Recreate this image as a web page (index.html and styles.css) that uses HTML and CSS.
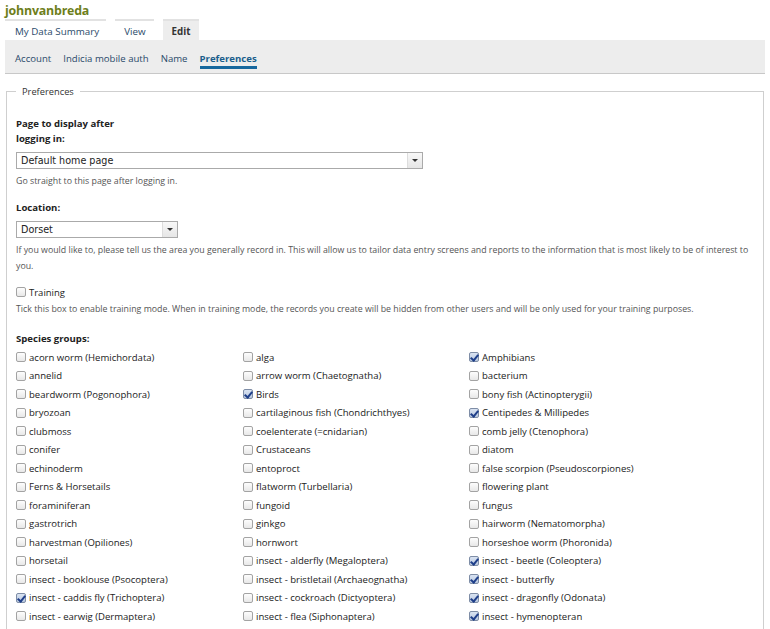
FILE: index.html
```html
<!DOCTYPE html>
<html lang="en">
<head>
<meta charset="utf-8">
<title>johnvanbreda</title>
<link rel="stylesheet" href="styles.css">
</head>
<body>
<h1 class="user-title">johnvanbreda</h1>
<ul class="tabs-primary">
  <li class="tab">My Data Summary</li>
  <li class="tab">View</li>
  <li class="tab active">Edit</li>
</ul>
<ul class="tabs-secondary">
  <li class="subtab">Account</li>
  <li class="subtab">Indicia mobile auth</li>
  <li class="subtab">Name</li>
  <li class="subtab active">Preferences</li>
</ul>
<fieldset class="prefs">
  <legend class="prefs-legend">Preferences</legend>
  <div class="field field-first">
    <div class="label label-narrow">Page to display after logging in:</div>
    <div class="select select-wide"><span class="select-value">Default home page</span><span class="select-btn"><span class="arrow"></span></span></div>
    <div class="desc">Go straight to this page after logging in.</div>
  </div>
  <div class="field">
    <div class="label">Location:</div>
    <div class="select select-short"><span class="select-value">Dorset</span><span class="select-btn"><span class="arrow"></span></span></div>
    <div class="desc desc-after-short">If you would like to, please tell us the area you generally record in. This will allow us to tailor data entry screens and reports to the information that is most likely to be of interest to you.</div>
  </div>
  <div class="field">
    <div class="check-line"><span class="cb"></span>Training</div>
    <div class="desc desc-after-check">Tick this box to enable training mode. When in training mode, the records you create will be hidden from other users and will be only used for your training purposes.</div>
  </div>
  <div class="field field-species">
    <div class="label">Species groups:</div>
    <div class="species">
      <div class="item"><span class="cb"></span>acorn worm (Hemichordata)</div>
      <div class="item"><span class="cb"></span>alga</div>
      <div class="item"><span class="cb on"></span>Amphibians</div>
      <div class="item"><span class="cb"></span>annelid</div>
      <div class="item"><span class="cb"></span>arrow worm (Chaetognatha)</div>
      <div class="item"><span class="cb"></span>bacterium</div>
      <div class="item"><span class="cb"></span>beardworm (Pogonophora)</div>
      <div class="item"><span class="cb on"></span>Birds</div>
      <div class="item"><span class="cb"></span>bony fish (Actinopterygii)</div>
      <div class="item"><span class="cb"></span>bryozoan</div>
      <div class="item"><span class="cb"></span>cartilaginous fish (Chondrichthyes)</div>
      <div class="item"><span class="cb on"></span>Centipedes &amp; Millipedes</div>
      <div class="item"><span class="cb"></span>clubmoss</div>
      <div class="item"><span class="cb"></span>coelenterate (=cnidarian)</div>
      <div class="item"><span class="cb"></span>comb jelly (Ctenophora)</div>
      <div class="item"><span class="cb"></span>conifer</div>
      <div class="item"><span class="cb"></span>Crustaceans</div>
      <div class="item"><span class="cb"></span>diatom</div>
      <div class="item"><span class="cb"></span>echinoderm</div>
      <div class="item"><span class="cb"></span>entoproct</div>
      <div class="item"><span class="cb"></span>false scorpion (Pseudoscorpiones)</div>
      <div class="item"><span class="cb"></span>Ferns &amp; Horsetails</div>
      <div class="item"><span class="cb"></span>flatworm (Turbellaria)</div>
      <div class="item"><span class="cb"></span>flowering plant</div>
      <div class="item"><span class="cb"></span>foraminiferan</div>
      <div class="item"><span class="cb"></span>fungoid</div>
      <div class="item"><span class="cb"></span>fungus</div>
      <div class="item"><span class="cb"></span>gastrotrich</div>
      <div class="item"><span class="cb"></span>ginkgo</div>
      <div class="item"><span class="cb"></span>hairworm (Nematomorpha)</div>
      <div class="item"><span class="cb"></span>harvestman (Opiliones)</div>
      <div class="item"><span class="cb"></span>hornwort</div>
      <div class="item"><span class="cb"></span>horseshoe worm (Phoronida)</div>
      <div class="item"><span class="cb"></span>horsetail</div>
      <div class="item"><span class="cb"></span>insect - alderfly (Megaloptera)</div>
      <div class="item"><span class="cb on"></span>insect - beetle (Coleoptera)</div>
      <div class="item"><span class="cb"></span>insect - booklouse (Psocoptera)</div>
      <div class="item"><span class="cb"></span>insect - bristletail (Archaeognatha)</div>
      <div class="item"><span class="cb on"></span>insect - butterfly</div>
      <div class="item"><span class="cb on"></span>insect - caddis fly (Trichoptera)</div>
      <div class="item"><span class="cb"></span>insect - cockroach (Dictyoptera)</div>
      <div class="item"><span class="cb on"></span>insect - dragonfly (Odonata)</div>
      <div class="item"><span class="cb"></span>insect - earwig (Dermaptera)</div>
      <div class="item"><span class="cb"></span>insect - flea (Siphonaptera)</div>
      <div class="item"><span class="cb on"></span>insect - hymenopteran</div>
    </div>
  </div>
</fieldset>
</body>
</html>
```
FILE: styles.css
```css
html, body {
  margin: 0;
  padding: 0;
  background: #fff;
}
body {
  padding: 0 5px;
  font-family: "Open Sans", "Liberation Sans", sans-serif;
  color: #222;
  overflow: hidden;
}
.user-title {
  margin: 0;
  padding-top: 2px;
  height: 17px;
  font-size: 12.4px;
  line-height: 17px;
  font-weight: bold;
  color: #6e7e1a;
  letter-spacing: -0.2px;
}
.tabs-primary {
  list-style: none;
  margin: 0;
  padding: 0;
  display: flex;
  gap: 9px;
  height: 21px;
}
.tab {
  border-top: 2px solid #e2e2e2;
  padding: 1px 8px 0 9px;
  font-size: 9.8px;
  line-height: 19px;
  color: #2a4a6a;
}
.tab:first-child {
  padding-left: 10px;
  padding-right: 7px;
}
.tab.active {
  background: #ededed;
  font-weight: bold;
  color: #333;
}
.tabs-secondary {
  list-style: none;
  margin: 0;
  padding: 0 10px;
  display: flex;
  gap: 12px;
  height: 33px;
  background: #ededed;
  border-bottom: 1px solid #c8c8c8;
}
.subtab {
  font-size: 9.6px;
  line-height: 14px;
  padding-top: 12px;
  color: #2a4a6a;
}
.subtab.active {
  font-weight: bold;
  color: #1b5e8c;
}
.subtab.active::after {
  content: "";
  display: block;
  height: 3px;
  background: #17689e;
}
.prefs {
  margin: 11px 1px 0;
  padding: 10px 9px 20px;
  border: 1px solid #cfcfcf;
}
.prefs-legend {
  padding: 0 6px;
  font-size: 9.3px;
  color: #333;
}
.field {
  margin-top: 10px;
}
.field-first {
  margin-top: 8px;
}
.field-species {
  margin-top: 14px;
}
.label {
  font-size: 9.6px;
  line-height: 15px;
  font-weight: bold;
  color: #222;
}
.label-narrow {
  width: 110px;
}
.select {
  display: flex;
  margin-top: 6px;
  height: 15px;
  border: 1px solid #aaa;
  background: #fff;
}
.select-wide { width: 405px; }
.select-short { width: 160px; }
.select-value {
  flex: 1;
  padding-left: 4px;
  font-family: "DejaVu Sans", sans-serif;
  font-size: 9.6px;
  line-height: 15px;
  color: #222;
}
.select-btn {
  width: 14px;
  background: linear-gradient(#f8f8f8, #e6e6e6);
  border-left: 1px solid #ddd;
  display: flex;
  align-items: center;
  justify-content: center;
}
.arrow {
  width: 0;
  height: 0;
  border-left: 3px solid transparent;
  border-right: 3px solid transparent;
  border-top: 3px solid #333;
}
.desc {
  margin-top: 4px;
  font-size: 8.8px;
  line-height: 16.5px;
  color: #555;
}
.desc-after-short {
  margin-top: 4px;
}
.desc-after-check {
  margin-top: 1px;
}
.check-line {
  font-size: 9.5px;
  line-height: 15px;
  display: flex;
  align-items: center;
  margin-top: 9px;
}
.species {
  margin-top: 2px;
  display: grid;
  grid-template-columns: 227px 226px auto;
  grid-auto-rows: 18.5px;
}
.item {
  display: flex;
  align-items: center;
  font-size: 9.55px;
  color: #222;
  white-space: nowrap;
}
.cb {
  position: relative;
  box-sizing: border-box;
  width: 10px;
  height: 10px;
  margin-right: 3px;
  border: 1px solid #a3a3a3;
  border-radius: 2px;
  background: linear-gradient(#fdfdfd, #e8e8e8);
  flex: none;
}
.cb.on {
  border-color: #7e8da6;
  background: linear-gradient(#d9e3f2, #b9c8de);
}
.cb.on::after {
  content: "";
  position: absolute;
  left: 2px;
  top: 0px;
  width: 3px;
  height: 6px;
  border-right: 2px solid #1f3f8a;
  border-bottom: 2px solid #1f3f8a;
  transform: rotate(40deg);
}
```
